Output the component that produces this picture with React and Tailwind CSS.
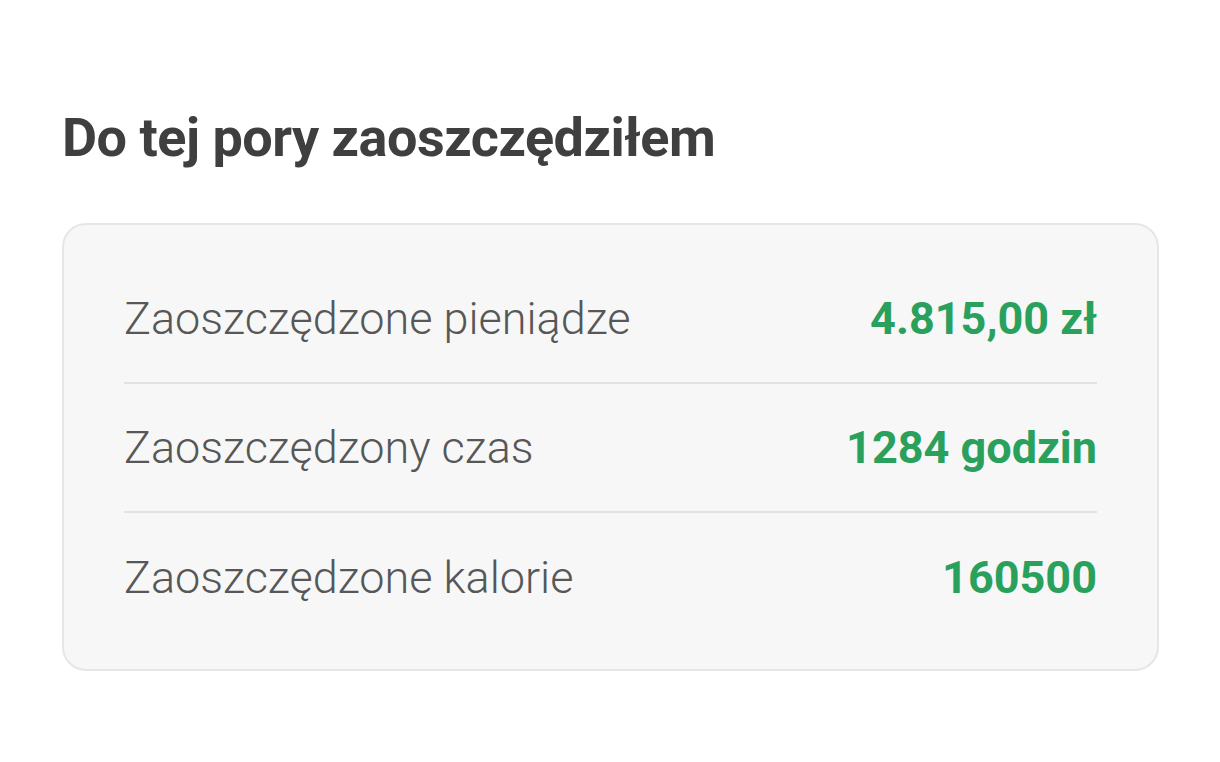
export default function App() {
  const rows = [
    ["Zaoszczędzone pieniądze", "4.815,00 zł"],
    ["Zaoszczędzony czas", "1284 godzin"],
    ["Zaoszczędzone kalorie", "160500"],
  ];
  return (
    <div className="w-[1220px] h-[762px] bg-white pt-[106px] pl-[62px] pr-[61px]" style={{ fontFamily: "Roboto, 'Liberation Sans', sans-serif" }}>
      <h1 className="text-[54px] leading-[64px] font-bold text-[#3f3f3f] tracking-[-0.5px]">Do tej pory zaoszczędziłem</h1>
      <div className="mt-[53px] bg-[#f7f7f7] border-2 border-[#e6e6e6] rounded-[24px] px-[60px] pt-[30px] pb-[27px]">
        {rows.map(([label, value], i) => (
          <div key={i} className={`flex items-center justify-between h-[129px] ${i < rows.length - 1 ? "border-b-2 border-[#e2e2e2]" : ""}`}>
            <span className="text-[45px] font-light text-[#575757]">{label}</span>
            <span className="text-[45px] font-bold text-[#2aa05d]">{value}</span>
          </div>
        ))}
      </div>
    </div>
  );
}
